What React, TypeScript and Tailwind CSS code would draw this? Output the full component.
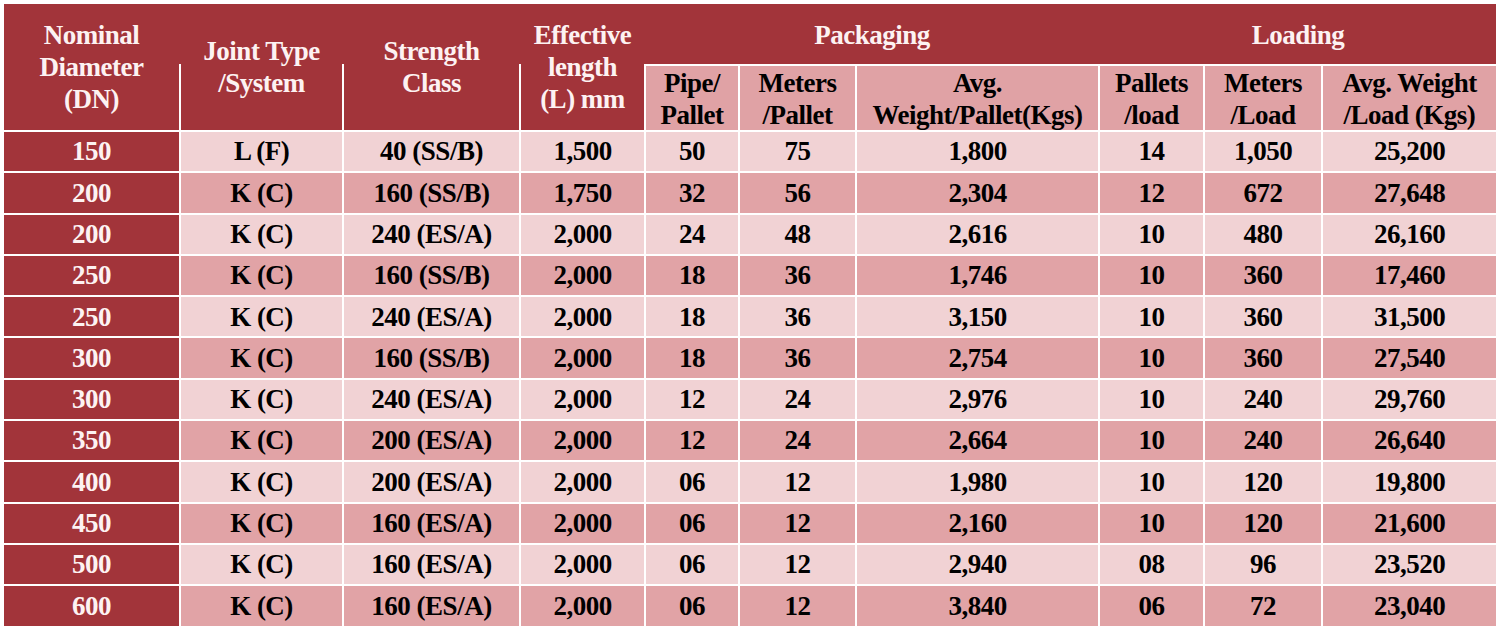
const cols =
  "grid grid-cols-[175px_161px_175px_123px_92px_115px_241px_103px_116px_173px] gap-[2px]";

const rows = [
  ["150", "L (F)", "40 (SS/B)", "1,500", "50", "75", "1,800", "14", "1,050", "25,200"],
  ["200", "K (C)", "160 (SS/B)", "1,750", "32", "56", "2,304", "12", "672", "27,648"],
  ["200", "K (C)", "240 (ES/A)", "2,000", "24", "48", "2,616", "10", "480", "26,160"],
  ["250", "K (C)", "160 (SS/B)", "2,000", "18", "36", "1,746", "10", "360", "17,460"],
  ["250", "K (C)", "240 (ES/A)", "2,000", "18", "36", "3,150", "10", "360", "31,500"],
  ["300", "K (C)", "160 (SS/B)", "2,000", "18", "36", "2,754", "10", "360", "27,540"],
  ["300", "K (C)", "240 (ES/A)", "2,000", "12", "24", "2,976", "10", "240", "29,760"],
  ["350", "K (C)", "200 (ES/A)", "2,000", "12", "24", "2,664", "10", "240", "26,640"],
  ["400", "K (C)", "200 (ES/A)", "2,000", "06", "12", "1,980", "10", "120", "19,800"],
  ["450", "K (C)", "160 (ES/A)", "2,000", "06", "12", "2,160", "10", "120", "21,600"],
  ["500", "K (C)", "160 (ES/A)", "2,000", "06", "12", "2,940", "08", "96", "23,520"],
  ["600", "K (C)", "160 (ES/A)", "2,000", "06", "12", "3,840", "06", "72", "23,040"],
];

const mainHeads = [
  ["Nominal", "Diameter", "(DN)"],
  ["Joint Type", "/System"],
  ["Strength", "Class"],
  ["Effective", "length", "(L) mm"],
];

const subHeads = [
  ["Pipe/", "Pallet"],
  ["Meters", "/Pallet"],
  ["Avg.", "Weight/Pallet(Kgs)"],
  ["Pallets", "/load"],
  ["Meters", "/Load"],
  ["Avg. Weight", "/Load (Kgs)"],
];

function Lines({ lines }: { lines: string[] }) {
  return (
    <div className="flex flex-col items-center leading-[32px]">
      {lines.map((l) => (
        <span key={l} className="whitespace-nowrap">
          {l}
        </span>
      ))}
    </div>
  );
}

export default function App() {
  return (
    <div className="min-h-screen bg-white pl-[4px] pt-[4px] font-['Liberation_Serif',serif] text-[27px] font-bold tracking-[-0.5px]">
      <div className="w-[1492px]">
        <div
          className={`${cols} grid-rows-[60px_64px] bg-[linear-gradient(to_bottom,#a2343a_60px,#ffffff_60px)]`}
        >
          {mainHeads.map((h) => (
            <div
              key={h[0]}
              className="row-span-2 flex items-center justify-center bg-[#a2343a] text-center text-[#fdf2f2]"
            >
              <Lines lines={h} />
            </div>
          ))}
          <div className="col-span-3 flex items-center justify-center bg-[#a2343a] pt-[2px] text-[#fdf2f2]">
            Packaging
          </div>
          <div className="col-span-3 flex items-center justify-center bg-[#a2343a] pt-[2px] text-[#fdf2f2]">
            Loading
          </div>
          {subHeads.map((h) => (
            <div
              key={h.join()}
              className="flex items-center justify-center bg-[#e0a2a5] pt-[2px] text-center text-black"
            >
              <Lines lines={h} />
            </div>
          ))}
        </div>

        <div className={`${cols} mt-[2px] auto-rows-[39.3px]`}>
          {rows.map((row, i) =>
            row.map((cell, j) => (
              <div
                key={`${i}-${j}`}
                className={
                  j === 0
                    ? "flex items-center justify-center bg-[#a2343a] text-[#fdf2f2]"
                    : i % 2 === 0
                      ? "flex items-center justify-center bg-[#f1d2d4] text-black"
                      : "flex items-center justify-center bg-[#e1a3a6] text-black"
                }
              >
                <span className="whitespace-nowrap">{cell}</span>
              </div>
            )),
          )}
        </div>
      </div>
    </div>
  );
}
